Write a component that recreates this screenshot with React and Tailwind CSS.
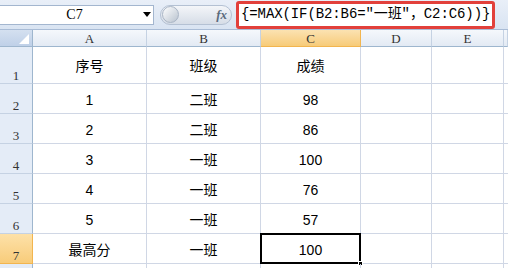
import React from 'react';

const cols = ['A', 'B', 'C', 'D', 'E', ''];
const rows = [
  { n: '1', h: 'h-[37px]', a: '序号', b: '班级', c: '成绩' },
  { n: '2', h: 'h-[30px]', a: '1', b: '二班', c: '98' },
  { n: '3', h: 'h-[30px]', a: '2', b: '二班', c: '86' },
  { n: '4', h: 'h-[30px]', a: '3', b: '一班', c: '100' },
  { n: '5', h: 'h-[30px]', a: '4', b: '一班', c: '76' },
  { n: '6', h: 'h-[30px]', a: '5', b: '一班', c: '57' },
  { n: '7', h: 'h-[30px]', a: '最高分', b: '一班', c: '100', sel: true },
  { n: '', h: 'h-[30px]', a: '', b: '', c: '' },
];

const cellFont = { fontFamily: '"Liberation Sans", "Noto Sans CJK SC", sans-serif' };
const headFont = { fontFamily: '"Liberation Serif", "Noto Sans CJK SC", serif' };

const FormulaBar = () => (
  <div className="flex h-[30px] items-center bg-gradient-to-b from-[#e9eff8] to-[#d9e4f2] border-b border-[#a9bcd6]">
    <div className="flex h-[20px] w-[154px] items-center border border-l-0 border-[#a3b6cf] bg-white">
      <span className="flex-1 pl-[6px] text-center text-[14px] text-black" style={headFont}>C7</span>
      <span className="mr-[2px] h-0 w-0 border-x-[4px] border-t-[5px] border-x-transparent border-t-black" />
    </div>
    <div className="ml-[6px] flex h-[20px] w-[72px] items-center rounded-full border border-[#b4c1d3] bg-gradient-to-b from-[#f4f6f9] to-[#d6dde7]">
      <span className="ml-[1px] h-[17px] w-[17px] rounded-full border border-[#a9b5c5] bg-gradient-to-br from-[#ffffff] to-[#b9c3cf]" />
      <span className="ml-auto mr-[4px] text-[13px] italic font-bold text-[#5b6b7d]" style={{ fontFamily: '"Liberation Serif", serif' }}>fx</span>
    </div>
    <div className="ml-[4px] flex h-[28px] w-[259px] items-center rounded-[3px] border-[3px] border-[#e2403b] bg-white pl-[2px]">
      <span className="whitespace-nowrap text-[14px] tracking-[-0.1px] text-black" style={{ fontFamily: '"Liberation Mono", "Noto Sans CJK SC", monospace' }}>
        {'{=MAX(IF(B2:B6=″一班″，C2:C6))}'}
      </span>
    </div>
    <div className="flex-1" />
  </div>
);

export default function App() {
  return (
    <div className="h-[268px] w-[508px] overflow-hidden bg-white">
      <FormulaBar />
      <div className="grid grid-cols-[33px_114px_114px_100px_71px_72px_4px]">
        <div className="relative h-[17px] border-r border-b border-[#9eb6ce] bg-gradient-to-b from-[#d4e0f0] to-[#bfd0e8]">
          <span className="absolute bottom-[2px] right-[3px] h-0 w-0 border-b-[10px] border-l-[10px] border-b-white border-l-transparent" />
        </div>
        {cols.map((c, i) => (
          <div
            key={i}
            className={`flex h-[17px] items-center justify-center border-r border-b text-[13px] leading-none ${
              c === 'C'
                ? 'border-r-[#f2b54f] border-b-[#f2b54f] bg-gradient-to-b from-[#fbe2b1] to-[#f7cb78] text-[#333]'
                : 'border-r-[#c5d2e3] border-b-[#9eb6ce] bg-gradient-to-b from-[#f5f8fc] to-[#e3eaf4] text-[#333]'
            }`}
            style={headFont}
          >
            {c}
          </div>
        ))}
        {rows.map((r, idx) => (
          <React.Fragment key={idx}>
            <div
              className={`flex ${r.h} items-end justify-center border-r border-b text-[13px] leading-[15px] text-[#333] ${
                r.sel
                  ? 'border-r-[#f2b54f] border-b-[#f2b54f] bg-gradient-to-b from-[#fde1a8] to-[#f8cc7a]'
                  : 'border-r-[#9eb6ce] border-b-[#c5d2e3] bg-[#e4ecf7]'
              }`}
              style={headFont}
            >
              {r.n}
            </div>
            <div className={`flex ${r.h} items-center justify-center border-r border-b border-[#d0d7e5] pt-[3px] text-[14px] text-black`} style={cellFont}>
              {r.a}
            </div>
            <div className={`flex ${r.h} items-center justify-center border-r border-b border-[#d0d7e5] pt-[3px] text-[14px] text-black`} style={cellFont}>
              {r.b}
            </div>
            <div className={`relative flex ${r.h} items-center justify-center border-r border-b border-[#d0d7e5] pt-[3px] text-[14px] text-black`} style={cellFont}>
              {r.sel && (
                <>
                  <span className="pointer-events-none absolute -left-[1px] -top-[1px] h-[31px] w-[101px] border-2 border-black" />
                  <span className="absolute -bottom-[3px] -right-[3px] h-[5px] w-[5px] border border-white bg-black" />
                </>
              )}
              {r.c}
            </div>
            <div className={`${r.h} border-r border-b border-[#d0d7e5]`} />
            <div className={`${r.h} border-r border-b border-[#d0d7e5]`} />
            <div className={`${r.h} border-b border-[#d0d7e5]`} />
          </React.Fragment>
        ))}
      </div>
    </div>
  );
}
